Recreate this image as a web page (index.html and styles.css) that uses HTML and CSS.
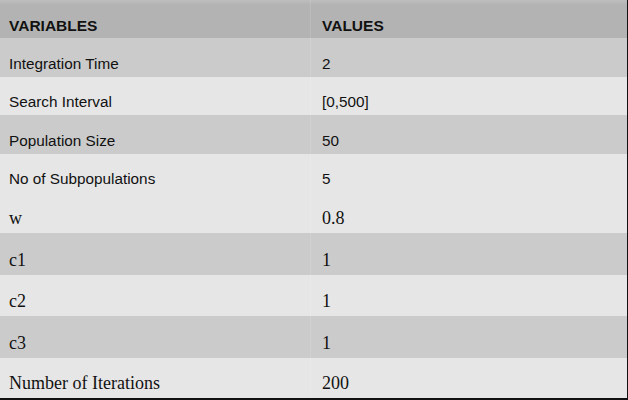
FILE: index.html
```html
<!DOCTYPE html>
<html lang="en">
<head>
<meta charset="utf-8">
<title>Variables</title>
<link rel="stylesheet" href="styles.css">
</head>
<body>
<div class="table">
  <div class="row head h38"><div class="cell">VARIABLES</div><div class="cell">VALUES</div></div>
  <div class="row dark h39 sans"><div class="cell">Integration Time</div><div class="cell">2</div></div>
  <div class="row light h38 sans"><div class="cell">Search Interval</div><div class="cell">[0,500]</div></div>
  <div class="row dark h39 sans"><div class="cell">Population Size</div><div class="cell">50</div></div>
  <div class="row light h38 sans"><div class="cell">No of Subpopulations</div><div class="cell">5</div></div>
  <div class="row light h41 serif"><div class="cell">w</div><div class="cell">0.8</div></div>
  <div class="row dark h42 serif"><div class="cell">c1</div><div class="cell">1</div></div>
  <div class="row light h41 serif"><div class="cell">c2</div><div class="cell">1</div></div>
  <div class="row dark h42 serif"><div class="cell">c3</div><div class="cell">1</div></div>
  <div class="row light h40 serif"><div class="cell">Number of Iterations</div><div class="cell">200</div></div>
</div>
</body>
</html>
```
FILE: styles.css
```css
html, body {
  margin: 0;
  padding: 0;
  background: #e6e6e6;
}
.table {
  width: 628px;
  height: 400px;
  box-sizing: border-box;
  border-right: 1px solid #111;
  border-bottom: 2px solid #111;
  color: #111;
}
.row {
  display: grid;
  grid-template-columns: 310px 1fr;
}
.cell {
  display: flex;
  align-items: flex-end;
  padding: 0 0 5px 9px;
}
.cell + .cell {
  padding-left: 11px;
  border-left: 1px solid rgba(255, 255, 255, 0.12);
}
.h38 { height: 38px; }
.h39 { height: 39px; }
.h40 { height: 40px; }
.h41 { height: 41px; }
.h42 { height: 42px; }
.head {
  background: linear-gradient(#bebebe, #b3b3b3 5px);
  font-family: "Liberation Sans", Arial, sans-serif;
  font-weight: bold;
  font-size: 15.5px;
  line-height: 17px;
}
.head .cell { padding-bottom: 4px; }
.dark { background: #cbcbcb; }
.light { background: #e6e6e6; }
.sans {
  font-family: "Liberation Sans", Arial, sans-serif;
  font-size: 15.3px;
  line-height: 17px;
}
.serif {
  font-family: "Liberation Serif", "Times New Roman", serif;
  font-size: 18px;
  line-height: 20px;
}
.serif .cell { padding-bottom: 5px; }
```
